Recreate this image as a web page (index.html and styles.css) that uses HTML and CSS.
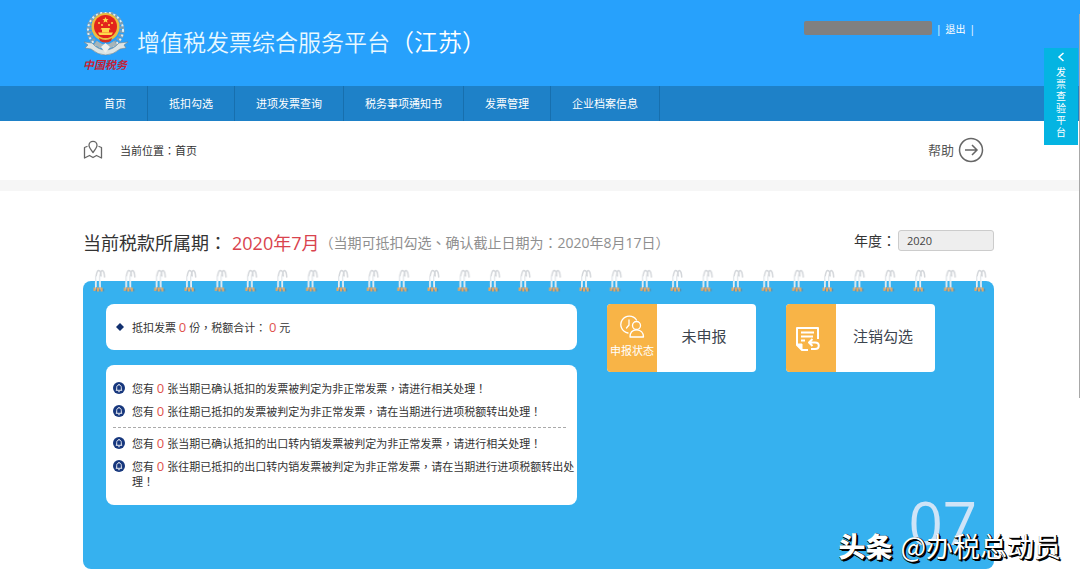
FILE: index.html
```html
<!DOCTYPE html>
<html lang="zh-TW">
<head>
    <meta charset="UTF-8">
    <meta name="viewport" content="width=device-width, initial-scale=1.0">
    <title>增值税发票综合服务平台（江苏）</title>
    <link rel="stylesheet" href="styles.css">
</head>
<body>
    <header class="header">
        <div class="wrap header-inner">
            <div class="logo">
                <svg width="46" height="46" viewBox="0 0 46 46" aria-hidden="true">
                    <circle cx="22.500" cy="18" r="16.500" fill="none" stroke="#7e9fb5" stroke-width="5" stroke-dasharray="3 1.300"/>
                    <circle cx="22.500" cy="18" r="17.500" fill="none" stroke="#e3edf0" stroke-width="2" stroke-dasharray="2 2.500"/>
                    <path d="M1 30 L9 31 Q15 38 22.500 38 Q30 38 36 31 L45 30 L41 33 L43 36 L37 37 Q30 43 22.500 43 Q15 43 8 37 L2 36 L5 33 Z" fill="#dce4e4" stroke="#71838d" stroke-width=".6"/>
                    <path d="M14 29 Q22.500 36 31 29 L34 33 Q22.500 40 11 33 Z" fill="#a7b5b9"/>
                    <path d="M18 35 L22.500 31 L27 35 L22.500 41 Z" fill="#eef1ee"/>
                    <circle cx="22.500" cy="15" r="14" fill="#edbd3f"/>
                    <circle cx="22.500" cy="14.500" r="11.500" fill="#e3241c"/>
                    <path d="M22.500 5 l.9 2 2.200.2 -1.700 1.400 .6 2.200 -2-1.200 -2 1.200 .6-2.200 -1.700-1.400 2.200-.2z" fill="#ffd84b"/>
                    <g fill="#ffd84b">
                        <circle cx="16" cy="11" r="1"/><circle cx="19" cy="13" r="1"/>
                        <circle cx="26" cy="13" r="1"/><circle cx="29" cy="11" r="1"/>
                        <path d="M18.500 16 h8 l1 1.500 h-1.500 v3 h-7 v-3 h-1.500z"/>
                        <path d="M15 20.500 h15 l-1.500 2.500 h-12z"/>
                    </g>
                    <path d="M16 26 Q22.500 30 29 26 L28 29 Q22.500 32 17 29 Z" fill="#d5301f"/>
                </svg>
                <span class="logo-text">中国税务</span>
            </div>
            <h1>增值税发票综合服务平台<span class="region">（江苏）</span></h1>
            <div class="user">
                <span class="user-name"></span>
                <span>|</span>
                <a href="#">退出</a>
                <span>|</span>
            </div>
        </div>
    </header>

    <nav class="nav">
        <ul class="wrap">
            <li><a href="#">首页</a></li>
            <li><a href="#">抵扣勾选</a></li>
            <li><a href="#">进项发票查询</a></li>
            <li><a href="#">税务事项通知书</a></li>
            <li><a href="#">发票管理</a></li>
            <li><a href="#">企业档案信息</a></li>
        </ul>
    </nav>

    <div class="crumb">
        <div class="wrap crumb-inner">
            <svg width="20" height="20" viewBox="0 0 20 20" fill="none" stroke="#666" stroke-width="1.300" stroke-linejoin="round" stroke-linecap="round" aria-hidden="true">
                <path d="M10 12.500 C8 10 6 7.500 6 5.300 A4 4 0 0 1 14 5.300 C14 7.500 12 10 10 12.500 Z"/>
                <path d="M4 6.500 L1.500 7.500 V18 L6.500 15.500 L10 17.500 L13.500 15.500 L18.500 18 V7.500 L16 6.500"/>
            </svg>
            <span class="crumb-text">当前位置：首页</span>
            <a class="help" href="#">帮助
                <svg width="26" height="26" viewBox="0 0 26 26" fill="none" stroke="#666" stroke-width="1.500" aria-hidden="true">
                    <circle cx="13" cy="13" r="11.500"/>
                    <path d="M7 13 H19 M14 8 L19 13 L14 18"/>
                </svg>
            </a>
        </div>
    </div>

    <main class="wrap">
        <div class="period">
            <h2>当前税款所属期：<span class="month">2020年7月</span></h2>
            <span class="deadline">（当期可抵扣勾选、确认截止日期为：2020年8月17日）</span>
            <label for="year">年度：</label>
            <input id="year" type="text" value="2020" readonly>
        </div>

        <section class="panel">
            <svg class="rings" width="100%" height="24" aria-hidden="true">
                <defs>
                    <pattern id="ring" width="30.380" height="24" patternUnits="userSpaceOnUse">
                        <g fill="none" stroke-linecap="round">
                            <path d="M2.800 20 C2.300 12 3 2 5.500 1.500 C7.300 1.300 7.800 4 8 7" stroke="#d3d6da" stroke-width="1.500"/>
                            <path d="M7.200 20 C6.300 12 7 2 9 1.500 C10.800 1.300 11.300 5 11.500 8" stroke="#d3d6da" stroke-width="1.500"/>
                            <path d="M2.800 19 C2.700 15 3 11 3.500 8 M7 19 C6.800 15 7 11 7.500 8" stroke="#f3f7fa" stroke-width="1.300"/>
                            <path d="M1.500 18.500 V22 M5 18.500 V22.500 M8.500 18.500 V22.500" stroke="#eca75b" stroke-width="2" stroke-linecap="butt"/>
                            <path d="M3.300 18.500 V22 M6.800 18.500 V22 M10.500 20 V22" stroke="#6c7480" stroke-width=".7"/>
                        </g>
                    </pattern>
                </defs>
                <rect width="100%" height="24" fill="url(#ring)"/>
            </svg>

            <div class="notices">
                <div class="box total">
                    <svg width="8" height="8" viewBox="0 0 8 8" aria-hidden="true"><path d="M4 0 L8 4 L4 8 L0 4 Z" fill="#12306f"/></svg>
                    <p>抵扣发票 <b>0</b> 份，税额合计： <b>0</b> 元</p>
                </div>
                <div class="box">
                    <svg class="defs" aria-hidden="true">
                        <symbol id="bell" viewBox="0 0 12 12">
                            <circle cx="6" cy="6" r="6" fill="#17377d"/>
                            <path d="M2.800 8.300 H9.200 M3.700 8 V5.500 C3.700 2 8.300 2 8.300 5.500 V8 M5.200 9.700 H6.800 M6 2 V3" fill="none" stroke="#fff" stroke-width=".9"/>
                        </symbol>
                    </svg>
                    <ul>
                        <li><svg width="12" height="12"><use href="#bell"/></svg><p>您有 <b>0</b> 张当期已确认抵扣的发票被判定为非正常发票，请进行相关处理！</p></li>
                        <li><svg width="12" height="12"><use href="#bell"/></svg><p>您有 <b>0</b> 张往期已抵扣的发票被判定为非正常发票，请在当期进行进项税额转出处理！</p></li>
                    </ul>
                    <ul>
                        <li><svg width="12" height="12"><use href="#bell"/></svg><p>您有 <b>0</b> 张当期已确认抵扣的出口转内销发票被判定为非正常发票，请进行相关处理！</p></li>
                        <li><svg width="12" height="12"><use href="#bell"/></svg><p>您有 <b>0</b> 张往期已抵扣的出口转内销发票被判定为非正常发票，请在当期进行进项税额转出处理！</p></li>
                    </ul>
                </div>
            </div>

            <button class="card" type="button">
                <span class="card-icon">
                    <svg width="26" height="26" viewBox="0 0 26 26" fill="none" stroke="#fff" stroke-width="1.300" stroke-linecap="round" stroke-linejoin="round" aria-hidden="true">
                        <path d="M9 19 A8.500 8.500 0 1 1 17.500 6"/>
                        <path d="M10 6 V11 L7.500 14"/>
                        <circle cx="17.500" cy="11.500" r="4"/>
                        <path d="M11 23 C11 18.500 13.500 15.800 17.500 15.800 C21.500 15.800 24.500 18.500 24.500 23 Z"/>
                    </svg>
                    <small>申报状态</small>
                </span>
                <span class="card-text">未申报</span>
            </button>
            <button class="card" type="button">
                <span class="card-icon">
                    <svg width="32" height="26" viewBox="0 0 32 26" fill="none" stroke="#fff" stroke-width="2" stroke-linejoin="round" aria-hidden="true">
                        <path d="M23 14 V3 H2 V20 L7 25 H13"/>
                        <path d="M2 19 H7 V25 Z" fill="#fff" stroke-width="1"/>
                        <path d="M6 7.500 H19 M6 11.500 H18 M6 15.500 H10"/>
                        <path d="M17.500 14 L14 17.500 L17.500 21 M14 17.500 H20 C25 17.500 25 24 20 24 H16"/>
                    </svg>
                </span>
                <span class="card-text">注销勾选</span>
            </button>

            <span class="month-num">07</span>
        </section>
    </main>

    <a class="side-tab" href="#">
        <svg width="8" height="10" viewBox="0 0 8 10" fill="none" stroke="#fff" stroke-width="1.500" aria-hidden="true"><path d="M6.500 1 L2 5 L6.500 9"/></svg>
        <span>发票查验平台</span>
    </a>
    <div class="scrollbar"></div>
    <div class="watermark"><b>头条</b> <span>@办税总动员</span></div>
</body>
</html>
```
FILE: styles.css
```css
* {
    box-sizing: border-box;
}
body {
    margin: 0;
    font-family: "Open Sans", "Noto Sans CJK TC", "Noto Sans CJK SC", sans-serif;
    font-size: 11px;
    color: #333;
    background: #fff;
}
h1, h2, p, ul {
    margin: 0;
    padding: 0;
    font-weight: 400;
}
ul {
    list-style: none;
}
a {
    color: inherit;
    text-decoration: none;
}
.wrap {
    margin: 0 86px 0 83px;
}

/* header */
.header {
    background: #27a1fc;
    color: #fff;
}
.header-inner {
    display: flex;
    align-items: flex-start;
    height: 86px;
    padding-top: 12px;
}
.logo {
    display: flex;
    flex-direction: column;
    width: 46px;
}
.logo-text {
    color: #c51f35;
    font-family: "Liberation Serif", "Noto Sans CJK TC", serif;
    font-size: 11px;
    font-weight: 700;
    font-style: italic;
    line-height: 14px;
    white-space: nowrap;
}
h1 {
    margin-left: 8px;
    padding-top: 12px;
    font-size: 23px;
    font-weight: 350;
    line-height: 36px;
    color: #e8f8ff;
    white-space: nowrap;
}
.region {
    font-size: 24px;
    color: #fff;
}
.user {
    display: flex;
    align-items: center;
    gap: 4px;
    margin-left: auto;
    margin-right: 19px;
    padding-top: 9px;
    font-size: 10px;
    line-height: 15px;
}
.user-name {
    width: 128px;
    height: 14px;
    margin-bottom: 3px;
    border-radius: 2px;
    background: #808080;
}

/* nav */
.nav {
    background: #1e81c8;
    color: #fff;
}
.nav ul {
    display: flex;
}
.nav a {
    display: block;
    padding: 0 21px;
    border-right: 1px solid #176fae;
    line-height: 35px;
}

/* breadcrumb */
.crumb {
    border-bottom: 11px solid #f6f6f6;
}
.crumb-inner {
    display: flex;
    align-items: center;
    height: 59px;
    padding-bottom: 2px;
}
.crumb-text {
    margin-left: 17px;
}
.help {
    display: flex;
    align-items: center;
    gap: 4px;
    margin-left: auto;
    margin-right: 10px;
    font-size: 13px;
    color: #555;
}

/* tax period */
.period {
    display: flex;
    align-items: center;
    height: 90px;
    padding-top: 12px;
}
h2 {
    font-size: 18px;
}
.month {
    margin-left: 5px;
    color: #d9434e;
}
.deadline {
    font-size: 14px;
    color: #8f8f8f;
}
.period label {
    margin-left: auto;
    margin-bottom: 4px;
    font-size: 14px;
}
.period input {
    width: 96px;
    height: 21px;
    margin: 0 0 4px 2px;
    padding: 0 8px;
    border: 1px solid #ccc;
    border-radius: 3px;
    background: #eee;
    font-family: inherit;
    font-size: 11px;
    color: #444;
}

/* calendar panel */
.panel {
    position: relative;
    display: flex;
    align-items: flex-start;
    gap: 30px;
    min-height: 288px;
    margin-bottom: 10px;
    padding: 23px;
    border-radius: 8px;
    background: #36b1ef;
}
.rings {
    position: absolute;
    top: -12px;
    left: 0;
    padding-left: 10px;
}
.notices {
    flex: 0 1 471px;
}
.box {
    padding: 12px 0 12px 7px;
    border-radius: 8px;
    background: #fff;
}
.box svg {
    flex: none;
}
.box b {
    font-size: 13px;
    font-weight: 400;
    line-height: 1px;
    color: #e0524d;
}
.box p {
    line-height: 15px;
}
.total {
    display: flex;
    align-items: center;
    gap: 8px;
    height: 46px;
    margin-bottom: 15px;
    padding-left: 10px;
}
.defs {
    position: absolute;
    width: 0;
    height: 0;
}
.box li {
    display: flex;
    align-items: flex-start;
    gap: 7px;
    padding: 4px 0;
}
.box li svg {
    margin-top: 1px;
}
.box ul + ul {
    margin-top: 4px;
    padding-top: 5px;
    background: repeating-linear-gradient(90deg, #aaa 0 3px, transparent 3px 5px) 0 0 / 454px 1px no-repeat;
}
.card {
    display: flex;
    flex: 0 0 149px;
    height: 68px;
    padding: 0;
    border: 0;
    border-radius: 4px;
    overflow: hidden;
    background: #fff;
    font-family: inherit;
    color: #3c444e;
    cursor: pointer;
}
.card-icon {
    display: flex;
    flex-direction: column;
    align-items: center;
    justify-content: center;
    width: 50px;
    height: 68px;
    background: #f8b447;
    color: #fff;
}
.card-icon small {
    font-size: 11px;
    line-height: 22px;
    white-space: nowrap;
}
.card-text {
    flex: 1;
    padding-right: 5px;
    font-size: 15px;
    line-height: 64px;
}
.month-num {
    position: absolute;
    right: 17px;
    bottom: 15px;
    font-size: 60px;
    line-height: 64px;
    color: #cfe4f7;
}

/* floating parts */
.side-tab {
    position: absolute;
    top: 48px;
    right: 2px;
    display: flex;
    flex-direction: column;
    align-items: center;
    gap: 4px;
    width: 34px;
    height: 97px;
    padding-top: 4px;
    background: #04b4e2;
    color: #fff;
}
.side-tab span {
    width: 10px;
    font-size: 10px;
    line-height: 12px;
}
.scrollbar {
    position: absolute;
    top: 14px;
    right: 0;
    width: 1px;
    height: 384px;
    background: #a8a8a8;
}
.watermark {
    position: absolute;
    right: 19px;
    bottom: 13px;
    display: flex;
    gap: 8px;
    font-family: "Noto Sans CJK TC", sans-serif;
    font-size: 27px;
    line-height: 40px;
    color: #fff;
    text-shadow: 1px 1px 0 #000, 2px 2px 0 #000, 1px 0 0 #000, 0 1px 0 #000;
}
.watermark b {
    font-weight: 900;
}
```
